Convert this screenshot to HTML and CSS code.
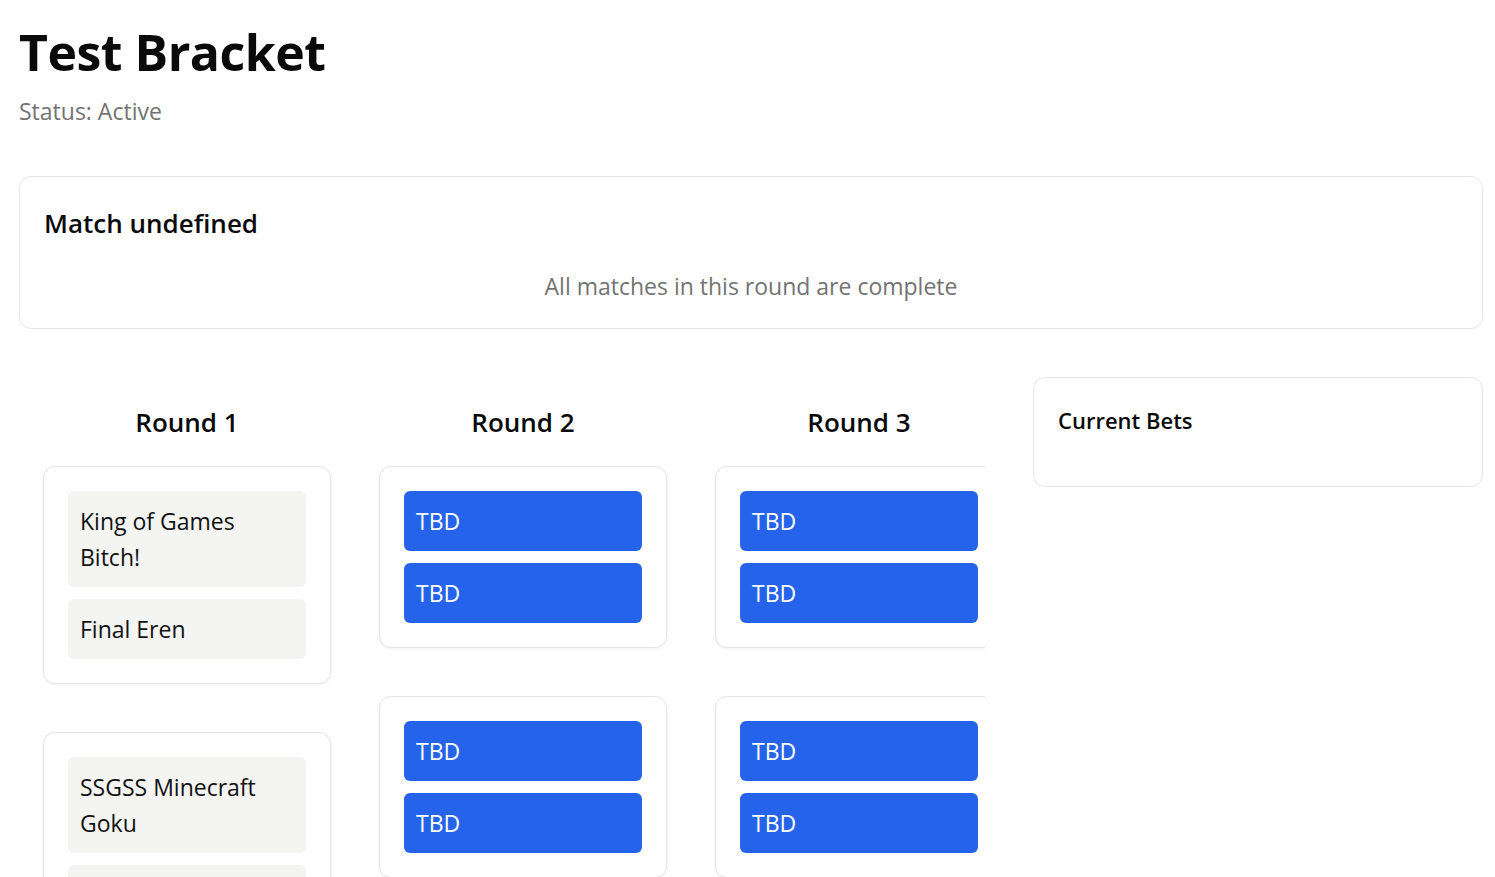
FILE: index.html
```html
<!DOCTYPE html>
<html lang="en">
<head>
<meta charset="utf-8">
<title>Test Bracket</title>
<link rel="stylesheet" href="styles.css">
</head>
<body>
<div class="page">
  <header class="header">
    <h1 class="title">Test Bracket</h1>
    <p class="status">Status: Active</p>
  </header>

  <section class="panel match-panel">
    <h2 class="panel-title">Match undefined</h2>
    <p class="empty-note">All matches in this round are complete</p>
  </section>

  <div class="main-grid">
    <div class="bracket">
      <div class="rounds">
        <div class="round">
          <h3 class="round-title">Round 1</h3>
          <div class="round-matches">
            <div class="match-card">
              <div class="slot slot-player">King of Games Bitch!</div>
              <div class="slot slot-player">Final Eren</div>
            </div>
            <div class="match-card">
              <div class="slot slot-player">SSGSS Minecraft Goku</div>
              <div class="slot slot-player">Goku Black</div>
            </div>
          </div>
        </div>
        <div class="round">
          <h3 class="round-title">Round 2</h3>
          <div class="round-matches">
            <div class="match-card">
              <div class="slot slot-tbd">TBD</div>
              <div class="slot slot-tbd">TBD</div>
            </div>
            <div class="match-card">
              <div class="slot slot-tbd">TBD</div>
              <div class="slot slot-tbd">TBD</div>
            </div>
          </div>
        </div>
        <div class="round">
          <h3 class="round-title">Round 3</h3>
          <div class="round-matches">
            <div class="match-card">
              <div class="slot slot-tbd">TBD</div>
              <div class="slot slot-tbd">TBD</div>
            </div>
            <div class="match-card">
              <div class="slot slot-tbd">TBD</div>
              <div class="slot slot-tbd">TBD</div>
            </div>
          </div>
        </div>
      </div>
    </div>

    <aside class="panel bets-panel">
      <h2 class="bets-title">Current Bets</h2>
      <div class="bets-list"></div>
    </aside>
  </div>
</div>
</body>
</html>
```

FILE: styles.css
```css
* {
  box-sizing: border-box;
}

html, body {
  margin: 0;
  padding: 0;
  background: #ffffff;
}

body {
  font-family: "Open Sans", "Noto Sans", "Liberation Sans", sans-serif;
  color: #111111;
  font-size: 23px;
  line-height: 36px;
}

.page {
  padding: 19px 12px 40px 19px;
}

.header {
  margin-bottom: 47px;
}

.title {
  margin: 0;
  font-size: 50px;
  line-height: 67px;
  font-weight: 700;
  color: #0a0a0a;
  letter-spacing: -0.5px;
}

.status {
  margin: 7px 0 0;
  font-size: 23px;
  line-height: 36px;
  color: #737373;
}

.panel {
  background: #ffffff;
  border: 1px solid #e5e5e5;
  border-radius: 12px;
  padding: 24px;
}

.match-panel {
  margin-bottom: 48px;
}

.panel-title {
  margin: 2px 0 0;
  font-size: 26px;
  line-height: 40px;
  font-weight: 600;
  color: #0a0a0a;
}

.empty-note {
  margin: 25px 0 0;
  text-align: center;
  color: #737373;
  font-size: 23px;
  line-height: 36px;
}

.main-grid {
  display: grid;
  grid-template-columns: 1fr 450px;
  gap: 48px;
  align-items: start;
}

.bracket {
  overflow: hidden;
  padding: 24px;
}

.rounds {
  display: flex;
  gap: 48px;
}

.round {
  flex: 0 0 288px;
  width: 288px;
}

.round-title {
  margin: 1px 0 24px;
  text-align: center;
  font-size: 26px;
  line-height: 40px;
  font-weight: 600;
  color: #0a0a0a;
}

.round-matches {
  display: flex;
  flex-direction: column;
  gap: 48px;
}

.match-card {
  border: 1px solid #e5e5e5;
  border-radius: 12px;
  padding: 24px;
  background: #ffffff;
  box-shadow: 0 1px 3px rgba(0, 0, 0, 0.06);
  display: flex;
  flex-direction: column;
  gap: 12px;
}

.slot {
  border-radius: 6px;
  padding: 12px;
  font-size: 23px;
  line-height: 36px;
}

.slot-player {
  background: #f4f4f3;
  color: #111111;
}

.slot-tbd {
  background: #2563eb;
  color: #ffffff;
}

.bets-title {
  margin: 0;
  font-size: 22px;
  line-height: 36px;
  font-weight: 600;
  color: #0a0a0a;
}

.bets-list {
  min-height: 24px;
}
```
